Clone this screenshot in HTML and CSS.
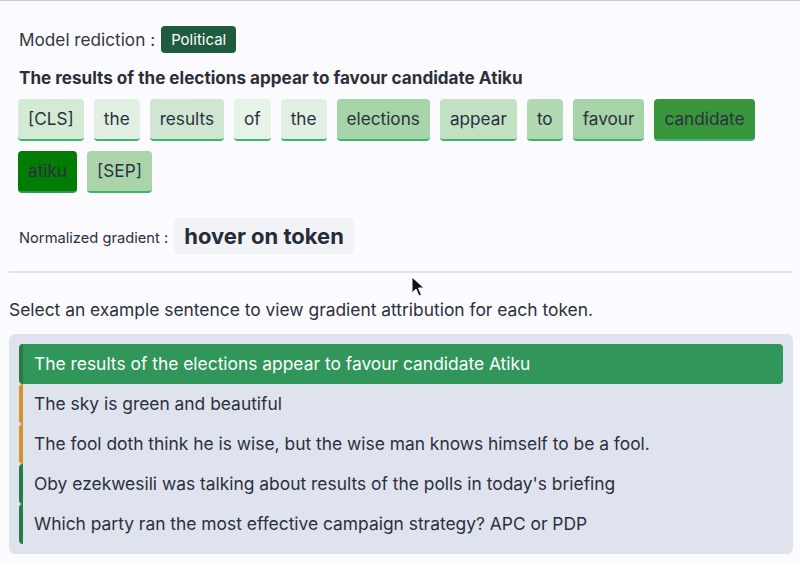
FILE: index.html
```html
<!DOCTYPE html>
<html>
<head>
<meta charset="utf-8">
<link rel="stylesheet" href="styles.css">
</head>
<body>
<div class="page">
  <div class="top">
    <div class="pred">
      <span class="pred-label">Model rediction :</span>
      <span class="badge">Political</span>
    </div>
    <div class="sentence">The results of the elections appear to favour candidate Atiku</div>
    <div class="tokens">
      <span class="tok t-cls">[CLS]</span>
      <span class="tok t-the">the</span>
      <span class="tok t-results">results</span>
      <span class="tok t-of">of</span>
      <span class="tok t-the">the</span>
      <span class="tok t-elections">elections</span>
      <span class="tok t-appear">appear</span>
      <span class="tok t-to">to</span>
      <span class="tok t-favour">favour</span>
      <span class="tok t-candidate">candidate</span>
      <span class="tok t-atiku">atiku</span>
      <span class="tok t-sep">[SEP]</span>
    </div>
    <div class="grad">
      <span class="grad-label">Normalized gradient :</span>
      <span class="grad-box">hover on token</span>
    </div>
  </div>
  <div class="rule"></div>
  <p class="hint">Select an example sentence to view gradient attribution for each token.</p>
  <div class="list">
    <div class="item active">The results of the elections appear to favour candidate Atiku</div>
    <div class="item orange">The sky is green and beautiful</div>
    <div class="item orange">The fool doth think he is wise, but the wise man knows himself to be a fool.</div>
    <div class="item green">Oby ezekwesili was talking about results of the polls in today's briefing</div>
    <div class="item green">Which party ran the most effective campaign strategy? APC or PDP</div>
  </div>
</div>
<svg class="cursor" width="14" height="22" viewBox="0 0 14 22"><path d="M1 1 L1 17 L5 13 L8 20 L10.5 19 L7.5 12 L13 12 Z" fill="#111" stroke="#fff" stroke-width="1"/></svg>
</body>
</html>
```
FILE: styles.css
```css
html, body {
  margin: 0;
  padding: 0;
  background: #fcfbff;
}
body {
  font-family: Inter, "Noto Sans", sans-serif;
  color: #2b3040;
  border-top: 1px solid #c9c8cc;
  height: 565px;
  overflow: hidden;
  position: relative;
}
.page {
  padding: 0 7px 0 9px;
}
.top {
  padding: 24px 0 0 10px;
}
.pred {
  display: flex;
  align-items: center;
  gap: 6px;
  height: 28px;
}
.pred-label {
  font-size: 17.2px;
  color: #333640;
}
.badge {
  background: #1e5c3d;
  color: #fff;
  font-size: 15px;
  border-radius: 4px;
  padding: 0 10px;
  height: 27px;
  line-height: 27px;
}
.sentence {
  margin-top: 14px;
  font-size: 17.1px;
  font-weight: 700;
  color: #2b2f3a;
  line-height: 22px;
}
.tokens {
  display: flex;
  flex-wrap: wrap;
  gap: 10px;
  margin-top: 10px;
  margin-left: -1px;
}
.tok {
  font-size: 17.2px;
  height: 40px;
  line-height: 40px;
  padding: 0 10px;
  border-radius: 4px;
  border-bottom: 2px solid #3db56c;
  color: #2b3040;
}
.t-cls { background: #d3ead4; }
.t-the { background: #e1f0e2; }
.t-results { background: #cfe6d0; }
.t-of { background: #e6f3e7; }
.t-elections { background: #a8d4a9; }
.t-appear { background: #c2e1c3; }
.t-to { background: #b1d9b2; }
.t-favour { background: #a6d3a7; }
.t-candidate { background: #38953b; }
.t-atiku { background: #027c02; border-bottom-color: #2a9d52; }
.t-sep { background: #aad5ab; }
.grad {
  display: flex;
  align-items: center;
  gap: 6px;
  margin-top: 25px;
}
.grad-label {
  font-size: 14.7px;
  color: #2b3040;
  padding-top: 3px;
}
.grad-box {
  background: #f2f3f7;
  border-radius: 4px;
  font-size: 22px;
  font-weight: 700;
  padding: 0 10px;
  height: 36px;
  line-height: 36px;
  color: #262b38;
}
.rule {
  height: 2px;
  background: #dfe4ee;
  margin-top: 17px;
}
.hint {
  margin: 24px 0 0 0;
  font-size: 17.4px;
  line-height: 25px;
  color: #2b3040;
}
.list {
  margin-top: 12px;
  background: #dfe3ed;
  border-radius: 6px;
  padding: 10px 10px 10px 10px;
}
.item {
  height: 40px;
  line-height: 40px;
  font-size: 17.4px;
  padding-left: 11px;
  border-left: 4px solid transparent;
  border-radius: 4px;
  color: #2b3040;
}
.item.active {
  background: #30965a;
  color: #fff;
  border-left-color: #267a48;
}
.item.orange { border-left-color: #d79529; }
.item.green { border-left-color: #247a4b; }
.cursor {
  position: absolute;
  left: 411px;
  top: 275px;
}
```
